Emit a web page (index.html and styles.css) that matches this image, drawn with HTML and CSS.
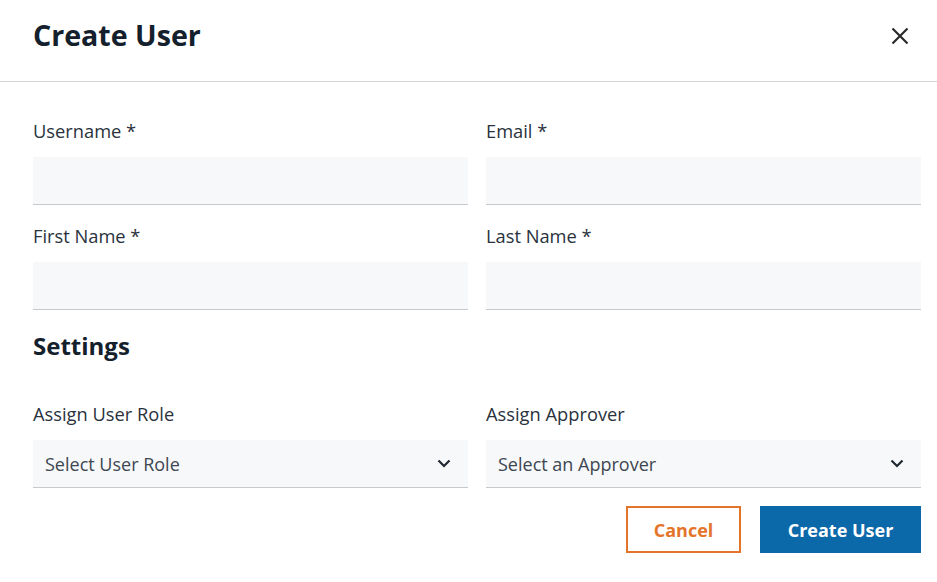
FILE: index.html
```html
<!DOCTYPE html>
<html lang="en">
<head>
<meta charset="utf-8">
<title>Create User</title>
<link rel="stylesheet" href="styles.css">
</head>
<body>
<div class="modal">
  <header class="modal-header">
    <h1 class="modal-title">Create User</h1>
    <button class="close-btn" aria-label="Close">
      <svg width="18" height="18" viewBox="0 0 18 18"><path d="M1.5 1.5L16.5 16.5M16.5 1.5L1.5 16.5" stroke="#2b2b2b" stroke-width="2.2" fill="none"/></svg>
    </button>
  </header>
  <form class="modal-body">
    <div class="grid">
      <div class="field">
        <label class="label">Username *</label>
        <input class="input" type="text">
      </div>
      <div class="field">
        <label class="label">Email *</label>
        <input class="input" type="text">
      </div>
      <div class="field">
        <label class="label">First Name *</label>
        <input class="input" type="text">
      </div>
      <div class="field">
        <label class="label">Last Name *</label>
        <input class="input" type="text">
      </div>
    </div>
    <h2 class="section-title">Settings</h2>
    <div class="grid">
      <div class="field">
        <label class="label">Assign User Role</label>
        <div class="select">
          <span>Select User Role</span>
          <svg width="14" height="9" viewBox="0 0 14 9"><path d="M1.5 1.5L7 7L12.5 1.5" stroke="#1f2730" stroke-width="2.2" fill="none"/></svg>
        </div>
      </div>
      <div class="field">
        <label class="label">Assign Approver</label>
        <div class="select">
          <span>Select an Approver</span>
          <svg width="14" height="9" viewBox="0 0 14 9"><path d="M1.5 1.5L7 7L12.5 1.5" stroke="#1f2730" stroke-width="2.2" fill="none"/></svg>
        </div>
      </div>
    </div>
    <div class="actions">
      <button type="button" class="btn btn-cancel">Cancel</button>
      <button type="button" class="btn btn-primary">Create User</button>
    </div>
  </form>
</div>
</body>
</html>
```
FILE: styles.css
```css
* { box-sizing: border-box; }
html, body { margin: 0; padding: 0; background: #fff; }
body { font-family: "Open Sans", "Liberation Sans", sans-serif; color: #29323d; }

.modal { width: 937px; }

.modal-header {
  display: flex;
  justify-content: space-between;
  align-items: flex-start;
  height: 82px;
  padding: 16px 28px 0 33px;
  border-bottom: 1px solid #d2d4d6;
}
.modal-title {
  margin: 0;
  font-size: 28.6px;
  line-height: 38px;
  font-weight: 700;
  color: #14202c;
}
.close-btn {
  margin-top: 11px;
  padding: 0;
  border: 0;
  background: none;
  width: 18px;
  height: 18px;
  display: flex;
}

.modal-body {
  padding: 37px 16px 0 33px;
}
.grid {
  display: grid;
  grid-template-columns: 1fr 1fr;
  column-gap: 18px;
  row-gap: 19px;
}
.field { display: flex; flex-direction: column; }
.label {
  font-size: 18.3px;
  line-height: 24px;
  margin-bottom: 14px;
  color: #29323d;
}
.input {
  height: 48px;
  border: 0;
  border-bottom: 1px solid #c6cacf;
  background: #f6f8fa;
  font-family: inherit;
  font-size: 18px;
  padding: 0 12px;
  outline: none;
}
.section-title {
  margin: 20px 0 40px;
  font-size: 24px;
  line-height: 32px;
  font-weight: 700;
  color: #14202c;
}
.select {
  height: 48px;
  display: flex;
  align-items: center;
  justify-content: space-between;
  padding: 0 17px 0 12px;
  background: #f6f8fa;
  border-bottom: 1px solid #c6cacf;
  font-size: 18px;
  color: #3d4651;
}
.actions {
  display: flex;
  justify-content: flex-end;
  gap: 19px;
  margin-top: 18px;
}
.btn {
  height: 47px;
  font-family: inherit;
  font-size: 18px;
  font-weight: 700;
  cursor: pointer;
}
.btn-cancel {
  width: 115px;
  background: #fff;
  border: 2px solid #e4742a;
  color: #e4742a;
}
.btn-primary {
  width: 161px;
  background: #0b69aa;
  border: 0;
  color: #fff;
}
```
